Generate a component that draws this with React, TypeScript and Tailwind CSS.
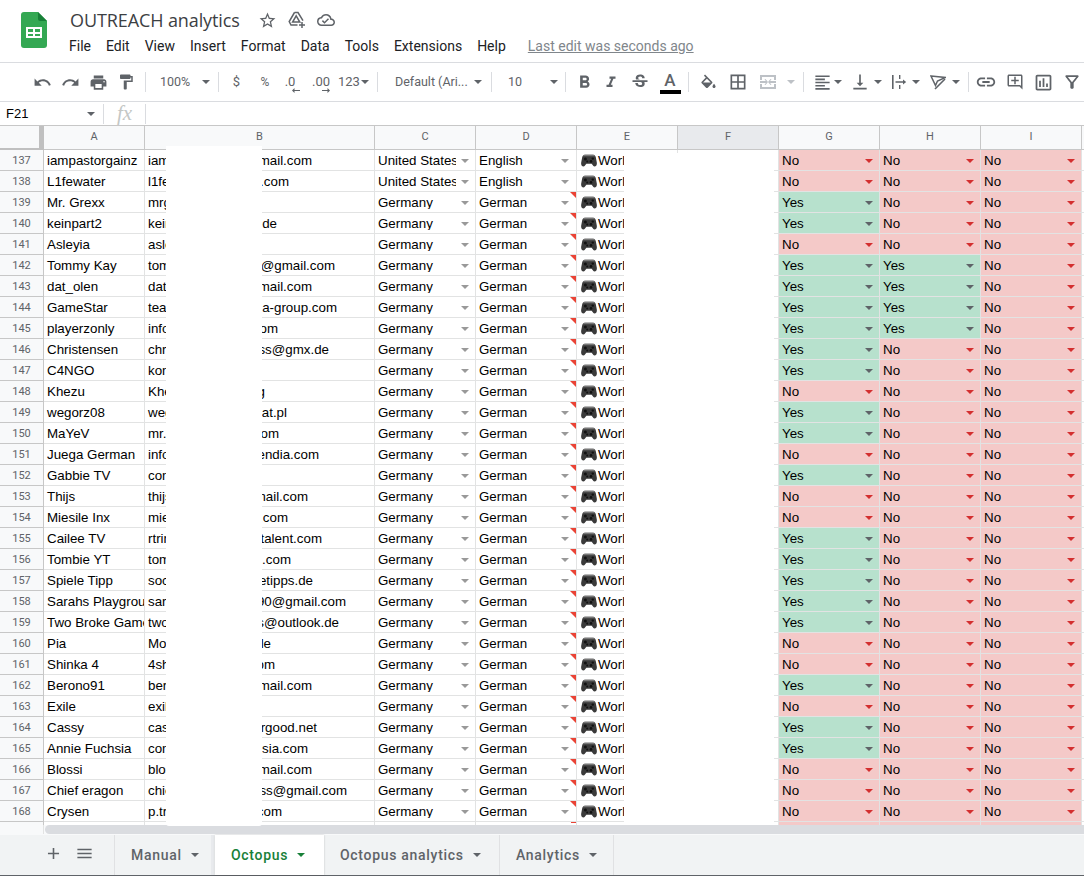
import React from "react";
import {
  MdUndo,
  MdRedo,
  MdPrint,
  MdFormatPaint,
  MdFormatBold,
  MdFormatItalic,
  MdStrikethroughS,
  MdBorderAll,
  MdFormatAlignLeft,
  MdVerticalAlignBottom,
  MdLink,
  MdOutlineAddComment,
  MdOutlineInsertChart,
  MdOutlineFilterAlt,
  MdStarBorder,
  MdOutlineCloudDone,
  MdAdd,
  MdMenu,
} from "react-icons/md";

const menus = ["File", "Edit", "View", "Insert", "Format", "Data", "Tools", "Extensions", "Help"];

// name, email start, email end, right edge of the visible end, G, H, I
type Row = [string, string, string, number, string];

const rows: Row[] = [
  ["iampastorgainz", "iamp", "mail.com", 312, "NNN"],
  ["L1fewater", "l1few", ".com", 289, "NNN"],
  ["Mr. Grexx", "mrgr", "", 0, "YNN"],
  ["keinpart2", "keinp", "de", 277, "YNN"],
  ["Asleyia", "aslei", "", 0, "NNN"],
  ["Tommy Kay", "tomm", "@gmail.com", 335, "YYN"],
  ["dat_olen", "dato", "mail.com", 312, "YYN"],
  ["GameStar", "team", "ia-group.com", 337, "YYN"],
  ["playerzonly", "info", "om", 278, "YYN"],
  ["Christensen", "chri", "ss@gmx.de", 329, "YNN"],
  ["C4NGO", "kont", "", 0, "YNN"],
  ["Khezu", "Khez", "g", 265, "NNN"],
  ["wegorz08", "wego", "at.pl", 287, "YNN"],
  ["MaYeV", "mr.m", "om", 279, "YNN"],
  ["Juega German", "info", "endia.com", 319, "NNN"],
  ["Gabbie TV", "cont", "", 0, "YNN"],
  ["Thijs", "thijs", "mail.com", 308, "NNN"],
  ["Miesile Inx", "mies", ".com", 288, "NNN"],
  ["Cailee TV", "rtrin", "talent.com", 322, "YNN"],
  ["Tombie YT", "tomb", "l.com", 291, "YNN"],
  ["Spiele Tipp", "soci", "etipps.de", 313, "YNN"],
  ["Sarahs Playground", "sara", "90@gmail.com", 346, "YNN"],
  ["Two Broke Gamers", "twob", "s@outlook.de", 339, "YNN"],
  ["Pia", "Moin", "le", 271, "NNN"],
  ["Shinka 4", "4shi", "om", 275, "NNN"],
  ["Berono91", "bero", "mail.com", 312, "YNN"],
  ["Exile", "exil", "", 0, "NNN"],
  ["Cassy", "cass", "rgood.net", 317, "YNN"],
  ["Annie Fuchsia", "cont", "sia.com", 308, "YNN"],
  ["Blossi", "blos", "mail.com", 312, "NNN"],
  ["Chief eragon", "chie", "ss@gmail.com", 347, "NNN"],
  ["Crysen", "p.tr", ".com", 282, "NNN"],
];

const rowGrid =
  "grid grid-cols-[44px_101px_230px_101px_101px_101px_101px_101px_101px_101px_2px]";

const Sep = ({ className = "" }: { className?: string }) => (
  <div className={`w-px h-5 bg-[#dadce0] shrink-0 ${className}`} />
);

const Caret = ({ className = "" }: { className?: string }) => (
  <div
    className={`w-0 h-0 shrink-0 border-x-[4px] border-t-[4px] border-x-transparent border-t-[#5f6368] ${className}`}
  />
);

const Slot = ({ className, children }: { className: string; children: React.ReactNode }) => (
  <div className={`flex items-center justify-center shrink-0 text-[#5f6368] ${className}`}>
    {children}
  </div>
);

const Logo = () => (
  <svg width="26" height="36" viewBox="0 0 26 36" className="shrink-0">
    <path d="M3 0H17L26 9V33A3 3 0 0 1 23 36H3A3 3 0 0 1 0 33V3A3 3 0 0 1 3 0Z" fill="#34a853" />
    <path d="M17 0L26 9H19A2 2 0 0 1 17 7Z" fill="#188038" />
    <path d="M5 15H21V26H5ZM7 17V20H12V17ZM14 17V20H19V17ZM7 22V24H12V22ZM14 22V24H19V22Z" fill="#fff" fillRule="evenodd" />
  </svg>
);

const Controller = () => (
  <svg width="16" height="13" viewBox="0 0 16 13" className="shrink-0">
    <path
      d="M4 .8H12C13.6.8 14.4 1.8 14.8 3.2L15.8 8.6C16.2 10.8 15 12.4 13.6 12.4C12.4 12.4 11.8 11.4 11.2 10.6L10.6 9.8H5.4L4.8 10.6C4.2 11.4 3.6 12.4 2.4 12.4C1 12.4-.2 10.8.2 8.6L1.2 3.2C1.6 1.8 2.4.8 4 .8Z"
      fill="#3a3a3a"
    />
    <path d="M4 .8H12C13 .8 13.8 1.3 14.2 2.2H1.8C2.2 1.3 3 .8 4 .8Z" fill="#777" />
    <circle cx="4.4" cy="5" r="1.5" fill="#111" />
    <circle cx="10" cy="7.4" r="1.3" fill="#111" />
    <circle cx="11.8" cy="4.6" r="1.2" fill="#111" />
    <circle cx="6.2" cy="7.4" r="1" fill="#111" />
  </svg>
);

const DriveAddIcon = () => (
  <svg width="18" height="18" viewBox="0 0 18 18" fill="none" stroke="#5f6368" strokeWidth="1.5">
    <path d="M6.5 1.5H10L15 9.6M6.5 1.5L1.2 10.6 3 14H9.5" />
    <path d="M8.2 4.8L11.8 11H4.6Z" />
    <path d="M14 11V17M11 14H17" />
  </svg>
);

const FillIcon = () => (
  <svg width="19" height="19" viewBox="0 0 24 20" fill="#5f6368">
    <path d="M16.56 8.94L7.62 0 6.21 1.41l2.38 2.38-5.15 5.15c-.59.59-.59 1.54 0 2.12l5.5 5.5c.29.29.68.44 1.06.44s.77-.15 1.06-.44l5.5-5.5c.59-.58.59-1.53 0-2.12zM5.21 10L10 5.21 14.79 10H5.21zM19 11.5s-2 2.17-2 3.5c0 1.1.9 2 2 2s2-.9 2-2c0-1.33-2-3.5-2-3.5z" />
  </svg>
);

const MergeIcon = () => (
  <svg width="16" height="16" viewBox="0 0 16 16" fill="#bdc1c6">
    <path d="M0 1H16V6H14V3H2V6H0ZM0 10H2V13H14V10H16V15H0ZM0 7H6L4.5 5.5 5.5 5 8 8 5.5 11 4.5 10.5 6 9H0ZM16 7H10L11.5 5.5 10.5 5 8 8 10.5 11 11.5 10.5 10 9H16Z" />
  </svg>
);

const WrapIcon = () => (
  <svg width="16" height="16" viewBox="0 0 16 16" fill="#5f6368">
    <path d="M1 1H2.6V15H1ZM8 1H9.4V5H8ZM8 11H9.4V15H8ZM4.5 7.3H12V5.4L15.2 8 12 10.6V8.7H4.5Z" />
  </svg>
);

const RotateIcon = () => (
  <svg width="16" height="16" viewBox="0 0 16 16" fill="none" stroke="#5f6368" strokeWidth="1.5">
    <path d="M1 2L15.5 3.5 7.5 7 5.5 11.5Z" />
    <path d="M15 5L5 15" strokeWidth="1.6" />
  </svg>
);

const ArrowLeft = () => (
  <svg width="8" height="5" viewBox="0 0 8 5" className="absolute left-[16px] top-[18px]" fill="#5f6368">
    <path d="M8 2V3H2.5V5L0 2.5 2.5 0V2Z" />
  </svg>
);

const ArrowRight = () => (
  <svg width="8" height="5" viewBox="0 0 8 5" className="absolute right-[4px] top-[18px]" fill="#5f6368">
    <path d="M0 2V3H5.5V5L8 2.5 5.5 0V2Z" />
  </svg>
);

const Cell = ({ className = "", children }: { className?: string; children?: React.ReactNode }) => (
  <div
    className={`relative flex items-center h-[21px] pt-px border-r border-b border-[#e2e3e3] overflow-hidden whitespace-nowrap ${className}`}
  >
    {children}
  </div>
);

const ChoiceCell = ({ value }: { value: string }) =>
  value === "Y" ? (
    <Cell className="bg-[#b7e1cd] border-[#a8cfbc] pl-[3px] pr-[6px] justify-between">
      Yes
      <Caret className="border-t-[#2b6e50]" />
    </Cell>
  ) : (
    <Cell className="bg-[#f4c9c8] border-[#e0b8b5] pl-[3px] pr-[6px] justify-between">
      No
      <Caret className="border-t-[#d32f2f]" />
    </Cell>
  );

const DataRow = ({ row, index }: { row: Row; index: number }) => {
  const [name, start, end, edge, flags] = row;
  const num = 137 + index;
  return (
    <div className={`${rowGrid} text-[13.33px] leading-none text-black font-['Liberation_Sans',sans-serif]`}>
      <div className="flex items-center justify-center h-[21px] pt-px bg-[#f8f9fa] border-r border-b border-[#c7c7c7] font-['Roboto',sans-serif] text-[11px] text-[#5f6368]">
        {num}
      </div>
      <Cell className="pl-[3px]">{name}</Cell>
      <Cell className="pl-[3px]">
        <div className="flex justify-between" style={{ width: edge ? edge - 148 : 40 }}>
          <span>{start}</span>
          <span>{end}</span>
        </div>
      </Cell>
      <Cell className="pl-[3px] pr-[6px] justify-between">
        <span className="overflow-hidden w-[78px]">{num < 139 ? "United States" : "Germany"}</span>
        <Caret className="border-t-[#999]" />
      </Cell>
      <Cell className="pl-[3px] pr-[7px] justify-between">
        {num < 139 ? "English" : "German"}
        <Caret className="border-t-[#999]" />
        {num >= 139 && (
          <div className="absolute top-0 right-0 w-0 h-0 border-l-[6px] border-t-[6px] border-l-transparent border-t-[#ea4335]" />
        )}
      </Cell>
      <Cell className="pl-[4px] gap-[1px]">
        <Controller />
        World
      </Cell>
      <Cell />
      <ChoiceCell value={flags[0]} />
      <ChoiceCell value={flags[1]} />
      <ChoiceCell value={flags[2]} />
      <div className="h-[21px] border-b border-[#e2e3e3]" />
    </div>
  );
};

const App = () => {
  const columns = ["A", "B", "C", "D", "E", "F", "G", "H", "I"];
  return (
    <div className="w-[1084px] h-[876px] overflow-hidden bg-white font-['Roboto',sans-serif]">
      <div className="flex h-[63px] pl-[21px] pt-[12px] border-b border-[#dadce0]">
        <Logo />
        <div className="ml-[23px] -mt-[4px]">
          <div className="flex items-center h-[24px]">
            <span className="text-[18px] leading-none text-[#3c4043] w-[170px] font-['Open_Sans',sans-serif] tracking-[-0.1px]">
              OUTREACH analytics
            </span>
            <MdStarBorder className="ml-[18px] text-[#5f6368]" size={19} />
            <div className="ml-[11px]">
              <DriveAddIcon />
            </div>
            <MdOutlineCloudDone className="ml-[11px] text-[#5f6368]" size={18} />
          </div>
          <div className="flex items-center gap-[15px] mt-[2px] h-[24px] text-[14px] text-[#202124] -ml-[1px]">
            {menus.map((m) => (
              <span key={m}>{m}</span>
            ))}
            <span className="ml-[7px] text-[#80868b] underline">Last edit was seconds ago</span>
          </div>
        </div>
      </div>

      <div className="flex items-center h-[39px] pl-[28px] border-b border-[#dadce0]">
        <Slot className="w-[28px]"><MdUndo size={19} /></Slot>
        <Slot className="w-[28px]"><MdRedo size={19} /></Slot>
        <Slot className="w-[28px]"><MdPrint size={19} /></Slot>
        <Slot className="w-[28px]"><MdFormatPaint size={18} /></Slot>
        <Sep className="ml-[5px]" />
        <span className="ml-[14px] w-[42px] shrink-0 text-[12.5px] text-[#5f6368]">100%</span>
        <Caret className="mr-[8px]" />
        <Sep />
        <Slot className="w-[35px] text-[13px]">$</Slot>
        <Slot className="w-[22px] text-[12px]">%</Slot>
        <Slot className="w-[32px] h-[24px] pr-[4px] text-[13px] relative">
          .0
          <ArrowLeft />
        </Slot>
        <Slot className="w-[26px] h-[24px] text-[13px] relative">
          .00
          <ArrowRight />
        </Slot>
        <span className="ml-[4px] w-[23px] shrink-0 text-[13px] text-[#5f6368]">123</span>
        <Caret />
        <Sep className="ml-[8px]" />
        <span className="ml-[17px] w-[79px] shrink-0 text-[12.5px] text-[#5f6368] whitespace-nowrap">Default (Ari...</span>
        <Caret />
        <Sep className="ml-[9px]" />
        <span className="ml-[16px] w-[42px] shrink-0 text-[12.5px] text-[#5f6368]">10</span>
        <Caret />
        <Sep className="ml-[7px]" />
        <Slot className="w-[36px]"><MdFormatBold size={21} /></Slot>
        <Slot className="w-[18px]"><MdFormatItalic size={21} /></Slot>
        <Slot className="w-[40px]"><MdStrikethroughS size={20} /></Slot>
        <div className="relative w-[20px] h-[24px] shrink-0 flex justify-center">
          <span className="text-[17px] leading-[20px] font-medium text-[#5f6368]">A</span>
          <div className="absolute left-0 bottom-[0px] w-[21px] h-[4px] bg-black" />
        </div>
        <Sep className="ml-[8px]" />
        <Slot className="w-[38px]"><FillIcon /></Slot>
        <Slot className="w-[22px]"><MdBorderAll size={20} /></Slot>
        <Slot className="w-[38px]"><MergeIcon /></Slot>
        <Caret className="border-t-[#bdc1c6]" />
        <Sep className="ml-[8px]" />
        <Slot className="ml-[6px] w-[24px]"><MdFormatAlignLeft size={19} /></Slot>
        <Caret />
        <Slot className="ml-[6px] w-[24px]"><MdVerticalAlignBottom size={20} /></Slot>
        <Caret className="ml-[2px]" />
        <Slot className="ml-[5px] w-[24px]"><WrapIcon /></Slot>
        <Caret className="ml-[1px]" />
        <Slot className="ml-[6px] w-[24px]"><RotateIcon /></Slot>
        <Caret className="ml-[2px]" />
        <Sep className="ml-[8px]" />
        <Slot className="ml-[5px] w-[24px]"><MdLink size={22} /></Slot>
        <Slot className="ml-[5px] w-[24px]"><MdOutlineAddComment size={18} /></Slot>
        <Slot className="ml-[4px] w-[24px]"><MdOutlineInsertChart size={21} /></Slot>
        <Slot className="ml-[5px] w-[24px]"><MdOutlineFilterAlt size={20} /></Slot>
      </div>

      <div className="flex items-center h-[24px] border-b border-[#c7c7c7]">
        <span className="ml-[6px] w-[81px] text-[13px] text-black font-['Liberation_Sans',sans-serif]">F21</span>
        <Caret />
        <Sep className="ml-[8px]" />
        <span className="w-[41px] text-center text-[21px] leading-none italic text-[#c4c7c5] font-['Liberation_Serif',serif]">fx</span>
        <Sep />
      </div>

      <div className="relative h-[708px] overflow-hidden">
        <div className="h-[699px] overflow-hidden">
          <div className={rowGrid}>
            <div className="h-[24px] bg-[#f8f9fa] border-b-2 border-r-[5px] border-[#c0c0c0]" />
            {columns.map((c) => (
              <div
                key={c}
                className={`flex items-center justify-center h-[24px] border-r border-b border-[#c7c7c7] text-[11px] text-[#5f6368] ${
                  c === "F" ? "bg-[#e8eaed]" : "bg-[#f8f9fa]"
                }`}
              >
                {c}
              </div>
            ))}
            <div className="h-[24px] bg-[#f8f9fa] border-b border-[#c7c7c7]" />
          </div>
          {rows.map((row, i) => (
            <DataRow key={i} row={row} index={i} />
          ))}
          <div className={rowGrid}>
            <div className="h-[21px] bg-[#f8f9fa] border-r border-[#c7c7c7]" />
            <Cell />
            <Cell />
            <Cell />
            <Cell>
              <div className="absolute top-0 right-0 w-[5px] h-px bg-[#ea4335]" />
            </Cell>
            <Cell />
            <Cell />
            <Cell className="bg-[#f4c9c8] border-[#e0b8b5]" />
            <Cell className="bg-[#f4c9c8] border-[#e0b8b5]" />
            <Cell className="bg-[#f4c9c8] border-[#e0b8b5]" />
            <div />
          </div>
        </div>
        <div className="flex h-[9px] bg-[#f8f9fa]">
          <div className="w-[44px] border-r border-[#e2e3e3]" />
          <div className="flex-1 ml-px rounded-l-[5px] bg-[#dadce0]" />
        </div>

        {/* blanked out parts of the sheet */}
        <div className="absolute left-[166px] top-[20px] w-[96px] h-[680px] bg-white rounded-b-[3px]" />
        <div className="absolute left-[624px] top-[27px] w-[150px] h-[672px] bg-white" />
      </div>

      <div className="flex h-[42px] bg-[#f1f3f4] border-t border-[#f8f9fa] border-b border-b-[#5f6368]">
        <MdAdd className="ml-[44px] mt-[9px] text-[#5f6368]" size={19} />
        <MdMenu className="ml-[12px] mt-[9px] text-[#5f6368]" size={19} />
        <div className="ml-[20px] w-px bg-[#e0e1e3]" />
        <div className="flex items-center w-[99px] pl-[16px] border-r-[3px] border-[#e8eaed] text-[14px] font-medium tracking-[0.7px] text-[#5f6368] gap-[9px]">
          Manual <Caret />
        </div>
        <div className="flex items-center w-[109px] pl-[16px] ml-[1px] bg-white shadow-[0_0_2px_rgba(0,0,0,0.2)] text-[14px] font-medium tracking-[0.7px] text-[#188038] gap-[9px]">
          Octopus <Caret className="border-t-[#188038]" />
        </div>
        <div className="flex items-center w-[176px] pl-[16px] border-r border-[#e0e1e3] text-[14px] font-medium tracking-[0.7px] text-[#5f6368] gap-[9px]">
          Octopus analytics <Caret />
        </div>
        <div className="flex items-center w-[114px] pl-[16px] border-r border-[#e0e1e3] text-[14px] font-medium tracking-[0.7px] text-[#5f6368] gap-[9px]">
          Analytics <Caret />
        </div>
      </div>
    </div>
  );
};

export default App;
